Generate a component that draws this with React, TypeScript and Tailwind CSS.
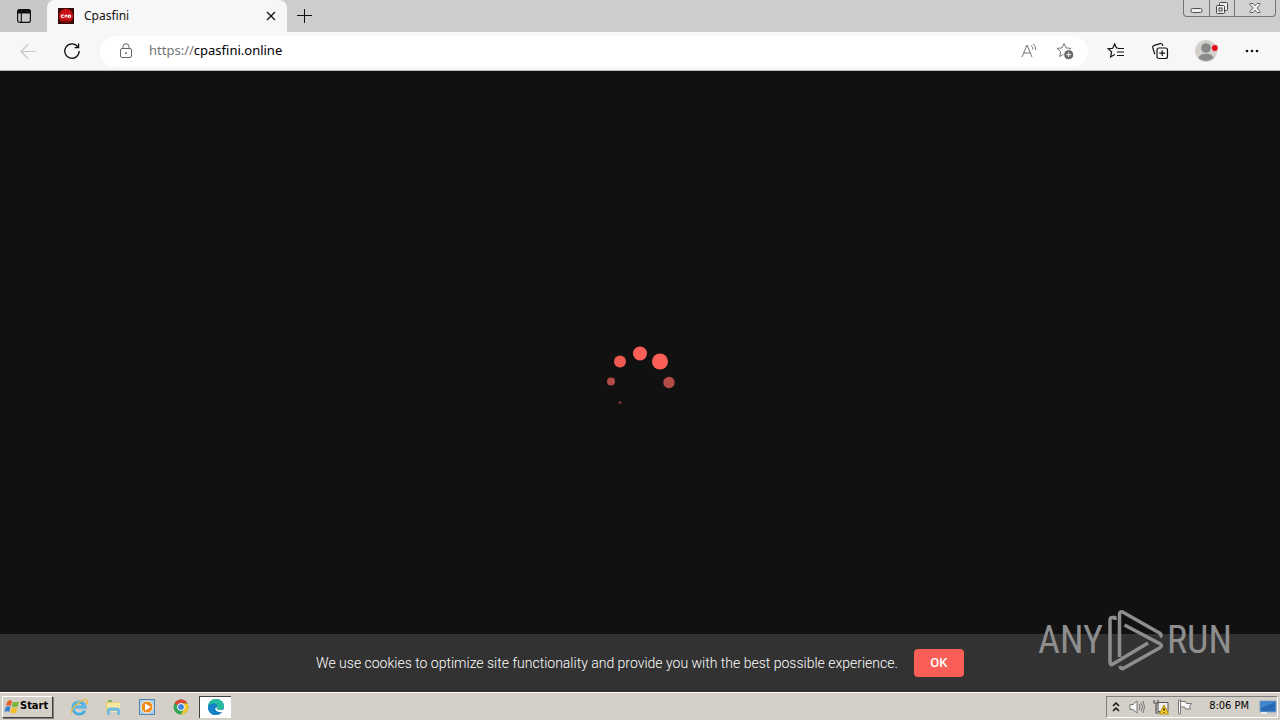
import type { ReactNode } from "react";

function TabStrip() {
  return (
    <header className="flex h-8 items-stretch bg-[#cdcdcd]">
      <button aria-label="Tab actions" className="flex w-12 items-center justify-center rounded-br-md bg-[#c8c8c8]">
        <svg width="16" height="16" viewBox="0 0 16 16" fill="none" stroke="#111" strokeWidth="1.2">
          <rect x="1.6" y="1.6" width="12.8" height="12.8" rx="2.2" />
          <path d="M2 3.5A2 2 0 0 1 4 1.6h8a2 2 0 0 1 2 1.9V5H2z" fill="#111" />
          <path d="M5.3 5v9.4" />
        </svg>
      </button>
      <div className="-ml-px flex w-60 items-center rounded-t-lg bg-[#f7f7f7] pr-2 pl-[11px]">
        <svg width="16" height="16" viewBox="0 0 16 16">
          <rect width="16" height="16" fill="#3a0808" />
          <circle cx="8" cy="8" r="7.2" fill="#c90f14" />
          <path d="M3 12.8h10L11 15H5z" fill="#6b0b0d" />
          <path d="M5.600 7.300a1.300 1.300 0 1 0 0 1.800M7 9.500V8a1 1 0 0 1 2 0v1.500M10.500 7.200h.7a1.100 1.100 0 1 1 0 2.100h-.7z" fill="none" stroke="#fff" strokeWidth="1.1" />
        </svg>
        <span className="ml-2.5 flex-1 text-xs text-[#111]">Cpasfini</span>
        <button aria-label="Close tab" className="flex size-4 items-center justify-center">
          <svg width="10" height="10" viewBox="0 0 10 10" stroke="#111" strokeWidth="1.3">
            <path d="M1 1l8 8M9 1L1 9" />
          </svg>
        </button>
      </div>
      <button aria-label="New tab" className="flex w-[34px] items-center justify-center">
        <svg width="16" height="16" viewBox="0 0 16 16" stroke="#111" strokeWidth="1">
          <path d="M8.5 1v14M1 7.5h15" />
        </svg>
      </button>
      <div className="mr-1 ml-auto flex h-[17px] rounded-b border border-t-0 border-[#747474] bg-[#d1d1d1]">
        <button aria-label="Minimize" className="flex w-[26px] items-center justify-center border-r border-[#747474]">
          <svg width="13" height="16" viewBox="0 0 13 16" fill="#eee" stroke="#505050">
            <rect x="1" y="8.5" width="11" height="4" rx="1.5" />
          </svg>
        </button>
        <button aria-label="Restore" className="flex w-[25px] items-center justify-center border-r border-[#747474]">
          <svg width="14" height="16" viewBox="0 0 14 16" fill="#eee" stroke="#444">
            <rect x="4.5" y="2.5" width="8" height="8" rx="1" />
            <rect x="1.5" y="5.5" width="8" height="8" rx="1" />
            <rect x="4" y="8" width="3" height="3" />
          </svg>
        </button>
        <button aria-label="Close" className="flex w-10 items-center justify-center">
          <svg width="12" height="12" viewBox="0 0 12 12" fill="#f0f0f0" stroke="#555" strokeWidth="0.9">
            <path d="M1 1.5h3L6 3.8 8 1.5h3v1L8 6l3 3.5v1H8L6 8.2 4 10.5H1v-1L4 6 1 2.5z" />
          </svg>
        </button>
      </div>
    </header>
  );
}

function Toolbar() {
  return (
    <nav className="flex h-[39px] items-center border-b border-[#b5b5b5] bg-[#f7f7f7] pr-4 pl-5">
      <button aria-label="Back" className="flex size-4 items-center justify-center" disabled>
        <svg width="16" height="16" viewBox="0 0 16 16" fill="none" stroke="#c6c6c6" strokeWidth="1.2">
          <path d="M16 8.500H1M8 1.500l-7 7 7 7" />
        </svg>
      </button>
      <button aria-label="Refresh" className="ml-7 flex size-4 items-center justify-center">
        <svg width="16" height="16" viewBox="0 0 16 16" fill="none" stroke="#111" strokeWidth="1.3">
          <path d="M15.2 8A7.2 7.2 0 1 1 13.8 3.8M14.6.6v4h-4" />
        </svg>
      </button>
      <div className="ml-5 flex h-[31px] flex-1 items-center rounded-full bg-white pr-3.5 pl-[18px]">
        <button aria-label="Site information" className="shrink-0">
          <svg width="16" height="16" viewBox="0 0 16 16" fill="none" stroke="#666">
            <rect x="2.5" y="5.5" width="11" height="9" rx="1.5" />
            <path d="M5 5.5V3.7a3 3 0 0 1 6 0v1.8" />
            <circle cx="8" cy="10" r=".9" fill="#666" stroke="none" />
          </svg>
        </button>
        <a href="https://cpasfini.online" className="ml-[15px] text-[13px] text-black">
          <span className="text-[#747474]">https://</span>cpasfini.online
        </a>
        <button aria-label="Read aloud" className="ml-auto">
          <svg width="18" height="18" viewBox="0 0 18 18" fill="none" stroke="#777">
            <path d="M2 15L7 3l5 12M3.7 11h6.6M11.2 3.5a5 5 0 0 1 1.6 4M13.3 1.8a8 8 0 0 1 2.4 6.3" />
          </svg>
        </button>
        <button aria-label="Add to favorites" className="ml-[18px]">
          <svg width="18" height="18" viewBox="0 0 18 18" fill="none" stroke="#777">
            <path d="M8 1.5l2 4.4 4.9.5-3.6 3.3 1 4.8L8 12l-4.3 2.5 1-4.8L1 6.4l5-.5z" />
            <circle cx="12.7" cy="12.7" r="5" fill="#666" stroke="white" />
            <path d="M12.7 10.2v5M10.2 12.7h5" stroke="white" />
          </svg>
        </button>
      </div>
      <div className="ml-[18px] flex items-center gap-6">
        <button aria-label="Favorites">
          <svg width="20" height="20" viewBox="0 0 20 20" fill="none" stroke="#111" strokeWidth="1.2">
            <path d="M12.2 7h-1.8L8.7 3 6.7 7.3l-4.5.5 3.4 3.1-1 5 4.2-2.5M12 7.5h6M11 11h7M11 14.5h7" />
          </svg>
        </button>
        <button aria-label="Collections">
          <svg width="20" height="20" viewBox="0 0 20 20" fill="none" stroke="#111" strokeWidth="1.2">
            <rect x="7" y="7" width="10.5" height="10.5" rx="2" />
            <path d="M12.2 9.3v5.8M9.3 12.2h5.8M4.8 13.2l-2-6.3a2 2 0 0 1 1.4-2.5l6-1.8a2 2 0 0 1 2.4 1.3l.3 1" />
          </svg>
        </button>
        <button aria-label="Profile">
          <svg width="24" height="24" viewBox="0 0 24 24">
            <circle cx="12" cy="12" r="11" fill="#d4d1cd" />
            <circle cx="12" cy="9" r="4.8" fill="#898989" />
            <path d="M4.5 19c1-5.8 14-5.8 15 0a11 11 0 0 1-15 0" fill="#898989" />
            <circle cx="20.8" cy="9" r="3.4" fill="#e00b1c" stroke="#f7f7f7" strokeWidth=".6" />
          </svg>
        </button>
        <button aria-label="Settings and more" className="-ml-0.5">
          <svg width="24" height="20" viewBox="0 0 24 20" fill="#111">
            <circle cx="7" cy="10" r="1.3" />
            <circle cx="12" cy="10" r="1.3" />
            <circle cx="17" cy="10" r="1.3" />
          </svg>
        </button>
      </div>
    </nav>
  );
}

function Watermark() {
  return (
    <div className="pointer-events-none absolute right-12 bottom-5 flex h-[64px] items-center gap-1 font-['Liberation_Sans_Narrow','Roboto_Condensed','Liberation_Sans',sans-serif] text-[38px] leading-none text-[#8e8e8e]">
      <span>ANY</span>
      <svg width="56" height="64" viewBox="0 0 56 64" fill="none" stroke="#8e8e8e" strokeWidth="3.5" strokeLinejoin="round">
        <path d="M8 12V9.500H5q-2 0-2 3V54q0 4 3 2l35-21" />
        <path d="M12.500 49V7q0-5 4-2.500l36 20.500q3 2 .5 4" />
        <path d="M17.500 17l35 18.500q4 2 0 4.500L17 60q-3 2-4-2" />
      </svg>
      <span>RUN</span>
    </div>
  );
}

function Spinner() {
  return (
    <svg role="img" aria-label="Loading" width="80" height="80" viewBox="0 0 80 80" fill="#f95f56">
      <circle cx="20" cy="19.500" r="6" fill="#ee5a50" />
      <circle cx="40" cy="11.500" r="7" />
      <circle cx="60" cy="19.500" r="8" />
      <circle cx="69" cy="40.500" r="5.700" fill="#b34b47" />
      <circle cx="11" cy="39.500" r="4" fill="#b34b47" />
      <circle cx="20" cy="60.500" r="1.500" fill="#7a3435" />
    </svg>
  );
}

function TaskButton({ label, children, active = false }: { label: string; children: ReactNode; active?: boolean }) {
  return (
    <button
      aria-label={label}
      className={
        active
          ? "flex h-[22px] w-8 items-center justify-center border-t border-l border-[#404040] bg-white"
          : "flex h-[22px] w-8 items-center justify-center"
      }
    >
      {children}
    </button>
  );
}

function Taskbar() {
  return (
    <footer className="flex h-7 items-center border-t border-white bg-[#d4d0c8] pl-0.5">
      <button className="flex h-[22px] w-[51px] items-center border border-t-white border-r-[#404040] border-b-[#404040] border-l-white pl-px font-['DejaVu_Sans_Condensed','Liberation_Sans',sans-serif] text-[11px] font-bold text-black shadow-[1px_1px_0_#808080]">
        <svg width="16" height="16" viewBox="0 0 16 16" className="shrink-0">
          <path d="M3.500 2.500Q6 .5 8 2L6.800 7Q4.500 5.500 2 7z" fill="#e95b26" />
          <path d="M9 2.500q2.500 1.500 6 0L13.700 7.500Q10 9 7.800 7.400z" fill="#7bb43a" />
          <path d="M1.700 8q2.500-1.500 4.800 0L5.300 13Q3 11.500.4 13z" fill="#3d82ce" />
          <path d="M7.500 8.500q2.500 1.500 6 0L12.200 13.500Q9 15 6.300 13.400z" fill="#f7bc28" />
        </svg>
        Start
      </button>
      <div className="ml-2.5 flex items-center gap-0.5">
        <TaskButton label="Internet Explorer">
          <svg width="18" height="18" viewBox="0 0 18 18" fill="none">
            <path d="M14.600 12.300A6 6 0 1 1 15 9H4" stroke="#42a5df" strokeWidth="3" />
            <path d="M14.300 12A5.800 5.800 0 1 1 15 9H5" stroke="#7bd0f4" />
            <path d="M2 15.500C-1 11 14-1 17 2.500c1 1-.5 3-1 3.500" stroke="#e8bd3b" strokeWidth="1.400" />
          </svg>
        </TaskButton>
        <TaskButton label="File Explorer">
          <svg width="18" height="18" viewBox="0 0 18 18">
            <path d="M2 3h5l1 1h7v10H2z" fill="#e5ca72" />
            <path d="M3 5h13v9H3z" fill="#f6e7a0" />
            <path d="M4 2h4v2H4z" fill="#80b56b" />
            <path d="M3 17v-5q0-2.500 2-2.500h8q3 0 3 2.500v5h-3v-4H6v4z" fill="#77bbdf" />
          </svg>
        </TaskButton>
        <TaskButton label="Media Player">
          <svg width="18" height="18" viewBox="0 0 18 18">
            <rect x="1.500" y="1.500" width="15" height="15" fill="#a9cce8" stroke="#5285b5" />
            <circle cx="9" cy="9" r="6" fill="#f28b17" stroke="#fff5db" />
            <path d="M7 5.500l6 3.500-6 3.500z" fill="white" />
          </svg>
        </TaskButton>
        <TaskButton label="Chrome">
          <svg width="18" height="18" viewBox="0 0 18 18">
            <circle cx="9" cy="9" r="7.500" fill="#35a454" />
            <path d="M9 9L2.500 5.200A7.500 7.500 0 0 1 15.500 5.500H9z" fill="#df4537" />
            <path d="M9 9V5.500h6.600A7.500 7.500 0 0 1 9 16.500L12 11z" fill="#f5c629" />
            <circle cx="9" cy="9" r="3.500" fill="#3f83df" stroke="white" />
          </svg>
        </TaskButton>
        <TaskButton label="Microsoft Edge" active>
          <svg width="18" height="18" viewBox="0 0 18 18">
            <circle cx="9" cy="9" r="8" fill="#137bc0" />
            <path d="M1 9C1 4.500 4.500 1 9 1c5 0 8 3.500 8 7 0 3-2.500 4-5 4-2 0-3-1-2-2.200C11 7 4.500 3.500 1 9" fill="#28bc9e" />
            <path d="M1 9c2-5.500 9-4.500 9.500-1C6 7 5 13 10 17 4 17.500 1 14 1 9" fill="#1684cb" />
            <path d="M10.200 9.300c-1.500 1.500.8 3.500 5 2.500l2.800-.6c-1 3.500-4.500 3.500-7.500 2.300-3-1.300-3-4-.3-4.200" fill="white" />
          </svg>
        </TaskButton>
      </div>
      <div className="mr-0.5 ml-auto flex h-[22px] items-center border border-t-[#808080] border-r-white border-b-white border-l-[#808080] pl-1 font-['DejaVu_Sans_Condensed','Liberation_Sans',sans-serif] text-[11px] text-black">
        <button aria-label="Show hidden icons">
          <svg width="10" height="14" viewBox="0 0 10 14" fill="none" stroke="#111" strokeWidth="1.500">
            <path d="M2 6l3-3 3 3M2 11l3-3 3 3" />
          </svg>
        </button>
        <div className="ml-2 flex items-center gap-2">
          <svg width="16" height="16" viewBox="0 0 16 16" fill="#f7f7f7" stroke="#777">
            <path d="M1 5.500h3L8 2v12l-4-3.500H1z" />
            <path d="M10 5q2 3 0 6M12 3.500q3 4.500 0 9M14 2q3 6 0 12" fill="none" />
          </svg>
          <svg width="16" height="16" viewBox="0 0 16 16">
            <path d="M5 3.500h10v9H5z" fill="#efefef" stroke="#555" />
            <path d="M1 1v3h4V1M3 4v10h4" fill="none" stroke="#555" strokeWidth="1.200" />
            <path d="M11 6l4.500 9h-9z" fill="#ffd426" stroke="#b28b17" />
            <path d="M11 9v3M11 13v1" stroke="#222" strokeWidth="1.200" />
          </svg>
          <svg width="16" height="16" viewBox="0 0 16 16" fill="#fafafa" stroke="#777">
            <path d="M1.500 1v14h2V1zM3.500 2.500h5l1 2h5l-2 3 1 2.500h-5l-1-2h-4z" />
          </svg>
        </div>
        <time className="ml-4 whitespace-nowrap">8:06 PM</time>
        <button aria-label="Show desktop" className="ml-2.5">
          <svg width="18" height="16" viewBox="0 0 18 16">
            <path d="M1 2h16v11H1z" fill="#2669b4" stroke="#7fa5cc" />
            <path d="M2 3h14L2 9z" fill="#4285d0" />
            <path d="M2 13h6v2H2z" fill="#e7edf4" />
          </svg>
        </button>
      </div>
    </footer>
  );
}

export default function App() {
  return (
    <div className="flex min-h-screen flex-col bg-[#111] font-['Noto_Sans','Liberation_Sans',sans-serif]">
      <TabStrip />
      <Toolbar />
      <main className="relative flex flex-1 items-center justify-center">
        <Spinner />
        <section aria-label="Cookie notice" className="absolute inset-x-0 bottom-0 flex min-h-[58px] items-center justify-center gap-4 bg-[#323232] px-4 font-[Roboto,sans-serif] text-white">
          <p className="text-sm font-light">We use cookies to optimize site functionality and provide you with the best possible experience.</p>
          <button className="h-7 w-[50px] rounded bg-[#f95f56] text-[13px] font-medium">OK</button>
        </section>
        <Watermark />
      </main>
      <Taskbar />
    </div>
  );
}
